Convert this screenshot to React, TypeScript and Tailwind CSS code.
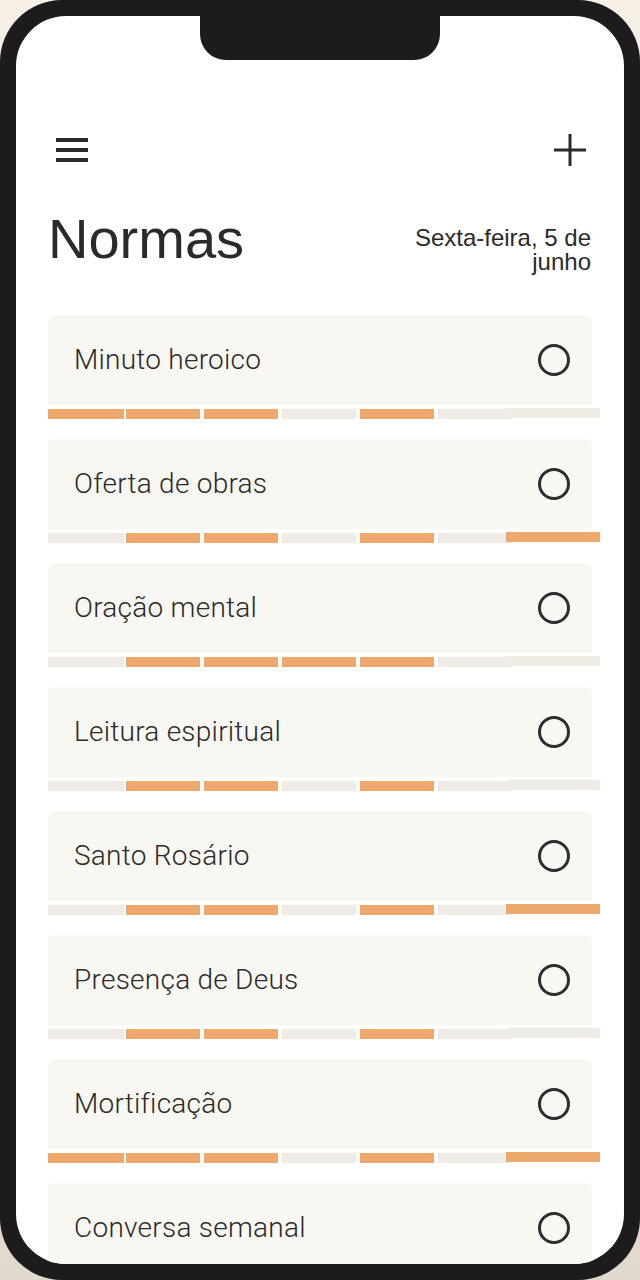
import React from "react";

type Row = { name: string; bars: boolean[]; last: boolean };

const rows: Row[] = [
  { name: "Minuto heroico", bars: [true, true, true, false, true, false], last: false },
  { name: "Oferta de obras", bars: [false, true, true, false, true, false], last: true },
  { name: "Oração mental", bars: [false, true, true, true, true, false], last: false },
  { name: "Leitura espiritual", bars: [false, true, true, false, true, false], last: false },
  { name: "Santo Rosário", bars: [false, true, true, false, true, false], last: true },
  { name: "Presença de Deus", bars: [false, true, true, false, true, false], last: false },
  { name: "Mortificação", bars: [true, true, true, false, true, false], last: true },
  { name: "Conversa semanal", bars: [false, true, true, false, true, false], last: false },
];

const segMargins = ["", "ml-[2px]", "ml-1", "ml-1", "ml-1", "ml-1"];
const segWidths = ["w-[76px]", "w-[74px]", "w-[74px]", "w-[74px]", "w-[74px]", "w-[74px]"];

function Card({ row }: { row: Row }) {
  return (
    <div className="flex flex-col">
      <div className="flex h-[90px] w-[544px] items-center justify-between rounded-t-lg bg-[#f8f7f2] pl-[26px] pr-[22px]">
        <span
          className="text-[28px] font-light tracking-[0.25px] text-[#2a2a2a]"
          style={{ fontFamily: "Roboto, 'Liberation Sans', sans-serif" }}
        >
          {row.name}
        </span>
        <div className="h-8 w-8 rounded-full border-[3px] border-[#2b2d2f]" />
      </div>
      <div className="mt-[3px] flex w-[552px] items-start">
        {row.bars.map((on, i) => (
          <div
            key={i}
            className={`mt-px h-[10px] ${segWidths[i]} ${segMargins[i]} ${on ? "bg-[#eca86d]" : "bg-[#efece5]"}`}
          />
        ))}
        <div
          className={`relative -ml-[6px] h-[10px] w-[94px] ${row.last ? "bg-[#eca86d]" : "bg-[#efece5]"}`}
        />
      </div>
    </div>
  );
}

export default function App() {
  return (
    <div className="h-[1280px] w-[640px] overflow-hidden bg-gradient-to-b from-[#f7f0e7] to-[#e2d9cd]">
      <div className="h-[1280px] w-[640px] rounded-[62px] bg-[#1c1c1c] p-4">
        <div className="relative h-[1248px] w-[608px] overflow-hidden rounded-[50px] bg-white">
          <div className="absolute left-[184px] top-0 z-10 h-[44px] w-[240px] rounded-b-[26px] bg-[#1c1c1c]" />
          <div
            className="flex flex-col px-8 text-[#2a2a2a]"
            style={{ fontFamily: "'Liberation Sans', Arial, sans-serif" }}
          >
            <div className="mt-[118px] flex h-8 items-center justify-between">
              <div className="ml-2 flex flex-col gap-[6px]">
                <div className="h-1 w-8 bg-[#2a2a2a]" />
                <div className="h-1 w-8 bg-[#2a2a2a]" />
                <div className="h-1 w-8 bg-[#2a2a2a]" />
              </div>
              <svg className="mr-[6px]" width="32" height="32" viewBox="0 0 32 32">
                <path d="M16 0V32M0 16H32" stroke="#2a2a2a" strokeWidth="3" fill="none" />
              </svg>
            </div>
            <div className="mt-[45px] flex items-start justify-between">
              <h1 className="text-[56px] font-normal leading-none">Normas</h1>
              <div className="mr-px mt-[15px] text-right text-[24px] leading-[24px]">
                Sexta-feira, 5 de
                <br />
                junho
              </div>
            </div>
            <div className="mt-[41px] flex flex-col gap-[20px]">
              {rows.map((r) => (
                <Card key={r.name} row={r} />
              ))}
            </div>
          </div>
        </div>
      </div>
    </div>
  );
}
